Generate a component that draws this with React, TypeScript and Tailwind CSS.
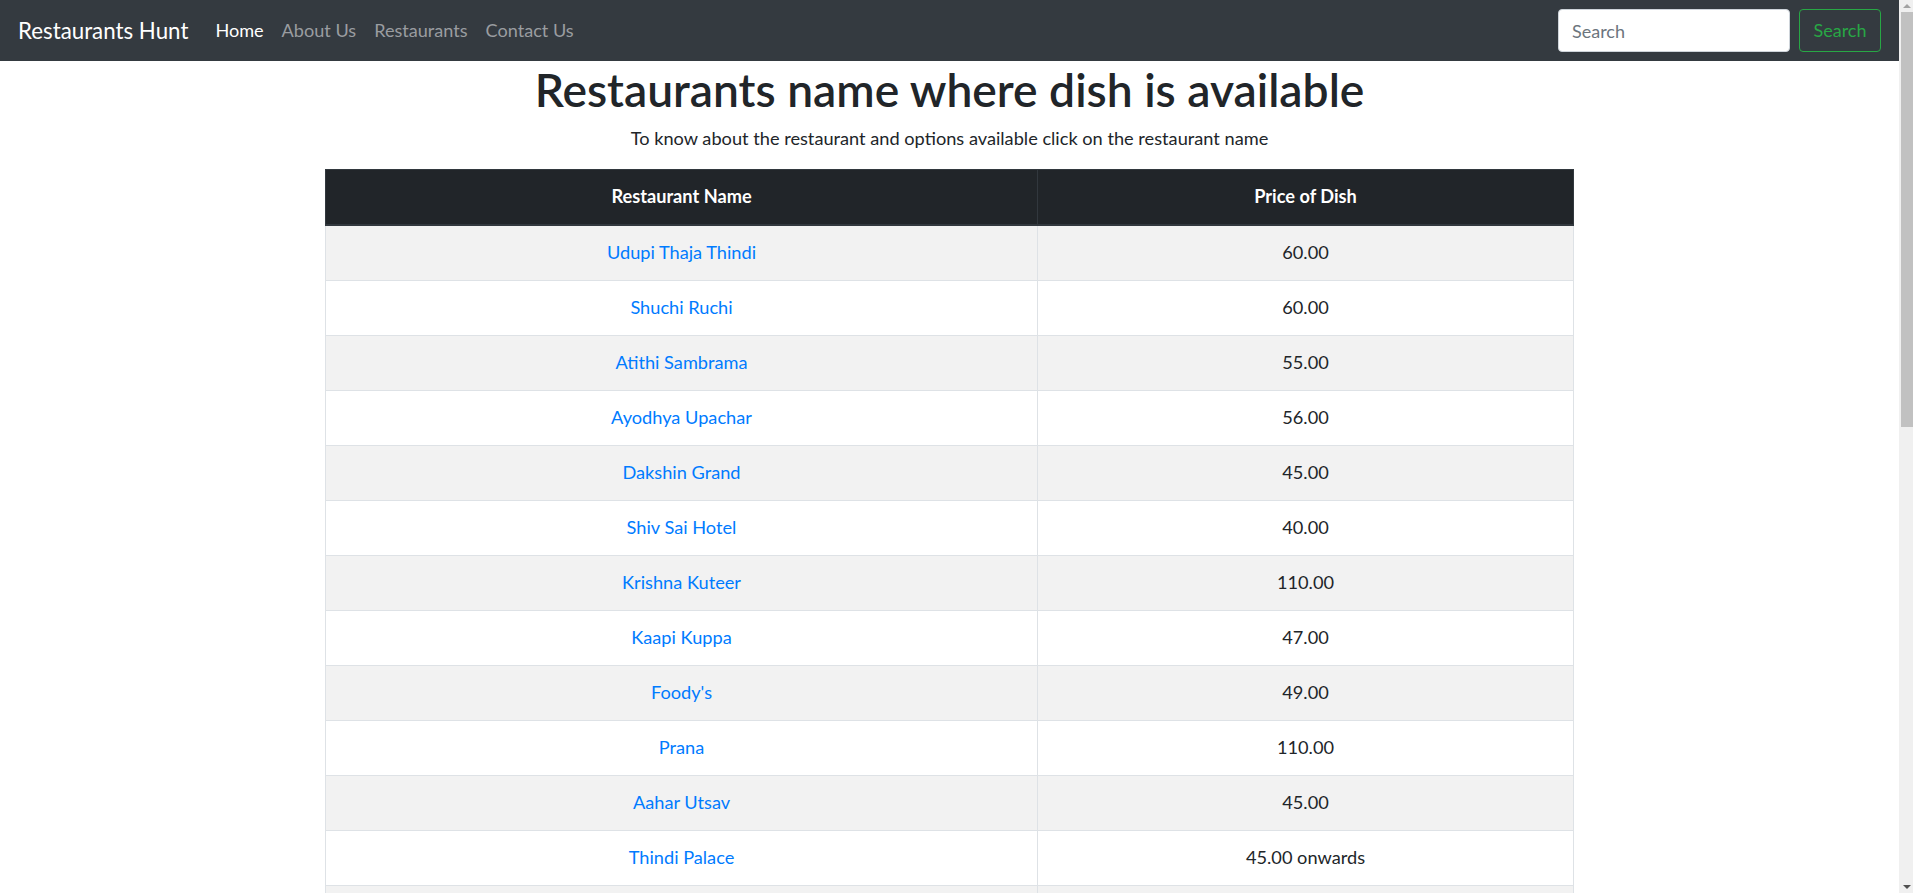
import React from "react";

const rows: [string, string][] = [
  ["Udupi Thaja Thindi", "60.00"],
  ["Shuchi Ruchi", "60.00"],
  ["Atithi Sambrama", "55.00"],
  ["Ayodhya Upachar", "56.00"],
  ["Dakshin Grand", "45.00"],
  ["Shiv Sai Hotel", "40.00"],
  ["Krishna Kuteer", "110.00"],
  ["Kaapi Kuppa", "47.00"],
  ["Foody's", "49.00"],
  ["Prana", "110.00"],
  ["Aahar Utsav", "45.00"],
  ["Thindi Palace", "45.00 onwards"],
  ["\u00a0", "\u00a0"],
  ["\u00a0", "\u00a0"],
];

export default function App() {
  return (
    <div className="flex h-[893px] w-full overflow-hidden bg-white font-['Lato','Noto_Sans',sans-serif] text-[#212529]">
      <div className="flex min-w-0 flex-1 flex-col">
        <nav className="flex h-[61px] shrink-0 items-center bg-[#343a40] px-[18px]">
          <a className="mr-[18px] text-[22.3px] leading-[33px] text-white" href="#">
            Restaurants Hunt
          </a>
          <div className="flex items-center text-[18.1px]">
            <a className="px-[9px] text-white" href="#">Home</a>
            <a className="px-[9px] text-[#9a9da0]" href="#">About Us</a>
            <a className="px-[9px] text-[#9a9da0]" href="#">Restaurants</a>
            <a className="px-[9px] text-[#9a9da0]" href="#">Contact Us</a>
          </div>
          <div className="ml-auto flex items-center">
            <input
              className="h-[43px] w-[232px] rounded-[4px] border border-[#ced4da] bg-white px-[13px] text-[18px] text-[#495057] outline-none placeholder:text-[#6c757d]"
              placeholder="Search"
            />
            <button className="ml-[9px] h-[43px] w-[82px] rounded-[4px] border border-[#28a745] text-[18px] text-[#28a745]">
              Search
            </button>
          </div>
        </nav>
        <main className="flex flex-col items-center">
          <h1 className="mt-[2px] mb-[9px] text-center text-[46.2px] leading-[53px] font-semibold">
            Restaurants name where dish is available
          </h1>
          <p className="mb-[18px] text-center text-[18.2px] leading-[26px]">
            To know about the restaurant and options available click on the restaurant name
          </p>
          <div className="w-[1249px] text-[18.2px]">
            <div className="flex h-[57px] border border-b-2 border-[#32383e] bg-[#212529] font-bold text-white">
              <div className="flex w-[712px] items-center justify-center border-r border-[#32383e]">
                Restaurant Name
              </div>
              <div className="flex flex-1 items-center justify-center">Price of Dish</div>
            </div>
            {rows.map(([name, price], i) => (
              <div
                key={i}
                className={`flex h-[55px] border-x border-b border-[#dee2e6] ${
                  i % 2 === 0 ? "bg-[#f2f2f2]" : "bg-white"
                }`}
              >
                <div className="flex w-[712px] items-center justify-center border-r border-[#dee2e6]">
                  <a href="#" className="text-[#007bff]">{name}</a>
                </div>
                <div className="flex flex-1 items-center justify-center">{price}</div>
              </div>
            ))}
          </div>
        </main>
      </div>
      <div className="flex w-[14px] shrink-0 flex-col bg-[#f0f0f0]">
        <div className="flex h-[12px] items-center justify-center pl-[2px]">
          <div className="h-0 w-0 border-x-[4px] border-b-[4px] border-x-transparent border-b-[#a3a3a3]" />
        </div>
        <div className="ml-[2px] h-[415px] bg-[#c1c1c1]" />
        <div className="flex-1" />
        <div className="flex h-[12px] items-center justify-center pl-[2px]">
          <div className="h-0 w-0 border-x-[4px] border-t-[4px] border-x-transparent border-t-[#505050]" />
        </div>
      </div>
    </div>
  );
}
